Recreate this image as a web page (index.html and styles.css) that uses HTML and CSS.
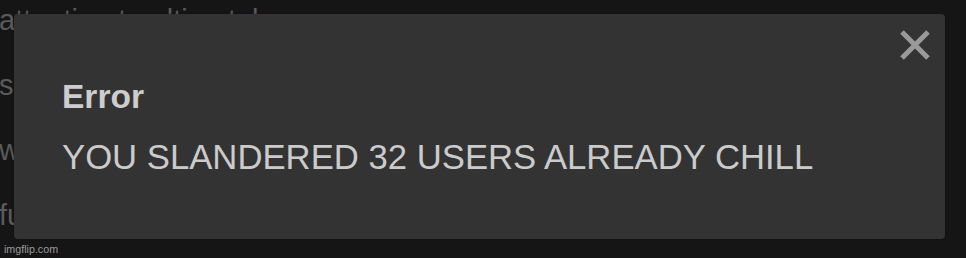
FILE: index.html
```html
<!DOCTYPE html>
<html lang="en">
<head>
    <meta charset="UTF-8">
    <title>Error</title>
    <link rel="stylesheet" href="styles.css">
</head>
<body>
    <div class="page-text">
        <p>attention to ultimately</p>
        <p>so it seems the</p>
        <p>with respect to</p>
        <p>further notice</p>
    </div>

    <div class="modal">
        <button class="close" aria-label="Close">
            <svg width="34" height="34" viewBox="0 0 34 34">
                <path d="M4 4 L30 30 M30 4 L4 30" stroke="#9a9a9a" stroke-width="5" stroke-linecap="butt"/>
            </svg>
        </button>
        <h4 class="modal-title">Error</h4>
        <p class="modal-body">YOU SLANDERED 32 USERS ALREADY CHILL</p>
    </div>

    <div class="watermark">imgflip.com</div>
</body>
</html>
```
FILE: styles.css
```css
* {
    box-sizing: border-box;
    margin: 0;
    padding: 0;
}
html, body {
    height: 100%;
}
body {
    font-family: "Liberation Sans", Arial, Helvetica, sans-serif;
    background-color: #151515;
    overflow: hidden;
    position: relative;
}
.page-text {
    display: flex;
    flex-direction: column;
    margin-top: -12px;
    margin-left: -1px;
}
.page-text p {
    color: #5a5a5a;
    font-size: 29px;
    line-height: 65px;
    white-space: nowrap;
}
.modal {
    position: absolute;
    left: 14px;
    top: 14px;
    width: 931px;
    height: 225px;
    background-color: #333333;
    border-radius: 4px;
    padding: 64px 48px 0 48px;
    box-shadow: 0 0 2px rgba(0,0,0,0.4);
}
.close {
    position: absolute;
    top: 14px;
    right: 13px;
    background: none;
    border: none;
    width: 34px;
    height: 34px;
    cursor: pointer;
}
.close svg {
    display: block;
}
.modal-title {
    color: #cdcdcd;
    font-size: 33.5px;
    font-weight: bold;
    line-height: 38px;
}
.modal-body {
    color: #cbcbcb;
    font-size: 34.7px;
    line-height: 40px;
    margin-top: 21px;
    white-space: nowrap;
}
.watermark {
    position: absolute;
    left: 4px;
    bottom: 3px;
    color: #9a9a9a;
    font-size: 10.7px;
}
```
